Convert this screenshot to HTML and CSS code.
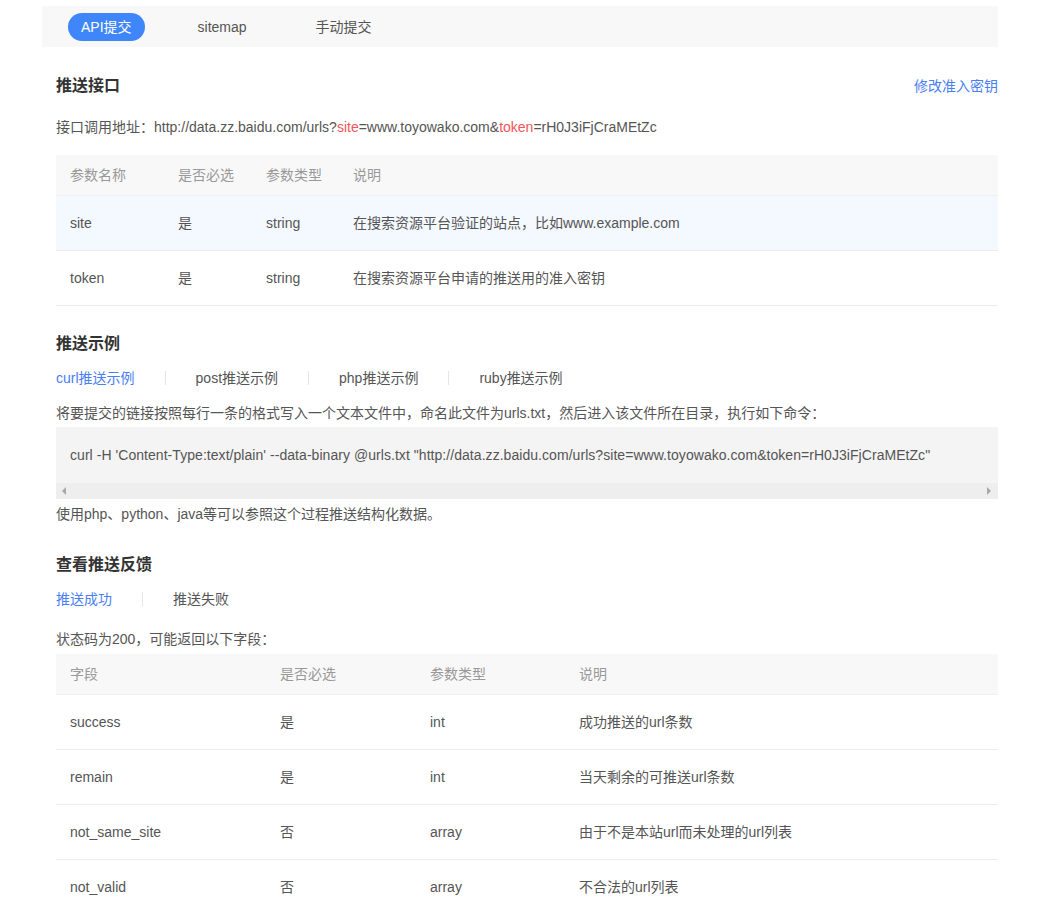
FILE: index.html
```html
<!DOCTYPE html>
<html lang="zh-CN">
<head>
<meta charset="utf-8">
<title>API提交</title>
<link rel="stylesheet" href="styles.css">
</head>
<body>
<div class="page">
  <nav class="topbar">
    <span class="pill active">API提交</span>
    <span class="pill">sitemap</span>
    <span class="pill">手动提交</span>
  </nav>

  <section class="content">
    <div class="head-row">
      <h2 class="title">推送接口</h2>
      <a class="link">修改准入密钥</a>
    </div>
    <p class="line url-line">接口调用地址：http://data.zz.baidu.com/urls?<span class="red">site</span>=www.toyowako.com&amp;<span class="red">token</span>=rH0J3iFjCraMEtZc</p>

    <table class="tbl tbl1">
      <colgroup>
        <col class="c1"><col class="c2"><col class="c3"><col>
      </colgroup>
      <thead>
        <tr><th>参数名称</th><th>是否必选</th><th>参数类型</th><th>说明</th></tr>
      </thead>
      <tbody>
        <tr class="hover"><td>site</td><td>是</td><td>string</td><td>在搜索资源平台验证的站点，比如www.example.com</td></tr>
        <tr><td>token</td><td>是</td><td>string</td><td>在搜索资源平台申请的推送用的准入密钥</td></tr>
      </tbody>
    </table>

    <h2 class="title t2">推送示例</h2>
    <div class="tabs">
      <span class="tab on">curl推送示例</span>
      <span class="tab">post推送示例</span>
      <span class="tab">php推送示例</span>
      <span class="tab">ruby推送示例</span>
    </div>
    <p class="line desc">将要提交的链接按照每行一条的格式写入一个文本文件中，命名此文件为urls.txt，然后进入该文件所在目录，执行如下命令：</p>
    <div class="code">
      <div class="code-text">curl -H 'Content-Type:text/plain' --data-binary @urls.txt "http://data.zz.baidu.com/urls?site=www.toyowako.com&amp;token=rH0J3iFjCraMEtZc"</div>
      <div class="scrollbar">
        <span class="arrow left"></span>
        <span class="arrow right"></span>
      </div>
    </div>
    <p class="line after-code">使用php、python、java等可以参照这个过程推送结构化数据。</p>

    <h2 class="title t3">查看推送反馈</h2>
    <div class="tabs">
      <span class="tab on">推送成功</span>
      <span class="tab">推送失败</span>
    </div>
    <p class="line status">状态码为200，可能返回以下字段：</p>

    <table class="tbl tbl2">
      <colgroup>
        <col class="d1"><col class="d2"><col class="d3"><col>
      </colgroup>
      <thead>
        <tr><th>字段</th><th>是否必选</th><th>参数类型</th><th>说明</th></tr>
      </thead>
      <tbody>
        <tr><td>success</td><td>是</td><td>int</td><td>成功推送的url条数</td></tr>
        <tr><td>remain</td><td>是</td><td>int</td><td>当天剩余的可推送url条数</td></tr>
        <tr><td>not_same_site</td><td>否</td><td>array</td><td>由于不是本站url而未处理的url列表</td></tr>
        <tr><td>not_valid</td><td>否</td><td>array</td><td>不合法的url列表</td></tr>
      </tbody>
    </table>
  </section>
</div>
</body>
</html>
```

FILE: styles.css
```css
html, body {
  margin: 0;
  padding: 0;
  background: #fff;
}
body {
  font-family: "Liberation Sans", "Noto Sans CJK SC", sans-serif;
  font-size: 14px;
  color: #555;
}
.page {
  width: 956px;
  margin-left: 42px;
  padding-top: 6px;
}
.topbar {
  height: 41px;
  background: #f8f8f8;
  display: flex;
  align-items: center;
  padding-left: 26px;
  box-sizing: border-box;
}
.pill {
  display: inline-flex;
  align-items: center;
  justify-content: center;
  height: 28px;
  border-radius: 14px;
  color: #555;
  line-height: 28px;
}
.pill.active {
  background: #3f86fa;
  color: #fff;
  padding: 0 13px;
  margin-right: 53px;
}
.pill:nth-child(2) { margin-right: 69px; }

.content {
  padding-left: 14px;
}
.head-row {
  display: flex;
  justify-content: space-between;
  align-items: center;
  margin-top: 28px;
  height: 22px;
}
.title {
  margin: 0;
  font-size: 16px;
  line-height: 22px;
  font-weight: bold;
  color: #333;
}
.link {
  color: #4a7ef5;
  font-size: 14px;
  line-height: 20px;
}
.line {
  margin: 0;
  line-height: 20px;
}
.url-line { margin-top: 20px; }
.red { color: #f2555a; }

.tbl {
  width: 100%;
  border-collapse: collapse;
  text-align: left;
}
.tbl th {
  font-weight: normal;
  color: #999;
  background: #f8f8f8;
  height: 40px;
  padding: 0 0 0 14px;
  border-bottom: 1px solid #f0f0f0;
  line-height: 20px;
}
.tbl td {
  height: 54px;
  padding: 0 0 0 14px;
  border-bottom: 1px solid #ececec;
  color: #555;
  line-height: 20px;
}
.tbl tr.hover td { background: #f4f8ff; }
.tbl1 { margin-top: 18px; }
.c1 { width: 108px; }
.c2 { width: 88px; }
.c3 { width: 87px; }
.tbl2 { margin-top: 5px; }
.d1 { width: 210px; }
.d2 { width: 150px; }
.d3 { width: 149px; }

.t2 { margin-top: 27px; }
.t3 { margin-top: 30px; }

.tabs {
  display: flex;
  align-items: center;
  margin-top: 13px;
  height: 20px;
  line-height: 20px;
}
.tab {
  color: #555;
  padding: 0 30px;
  border-left: 1px solid #e6e6e6;
  line-height: 14px;
  height: 14px;
  display: inline-flex;
  align-items: center;
}
.tab:first-child {
  padding-left: 0;
  border-left: none;
  padding-right: 30px;
}
.tab.on { color: #4a7ef5; }

.desc { margin-top: 15px; }
.code {
  margin-top: 4px;
  background: #f4f4f4;
}
.code-text {
  height: 56px;
  line-height: 56px;
  padding-left: 14px;
  white-space: nowrap;
  color: #555;
  letter-spacing: 0.05px;
}
.scrollbar {
  height: 16px;
  background: #eeeeee;
  display: flex;
  justify-content: space-between;
  align-items: center;
  padding: 0 7px 0 6px;
}
.arrow {
  width: 0;
  height: 0;
  border-top: 4px solid transparent;
  border-bottom: 4px solid transparent;
}
.arrow.left { border-right: 4px solid #a8a8a8; }
.arrow.right { border-left: 4px solid #a8a8a8; }
.after-code { margin-top: 5px; }
.status { margin-top: 20px; }
```
